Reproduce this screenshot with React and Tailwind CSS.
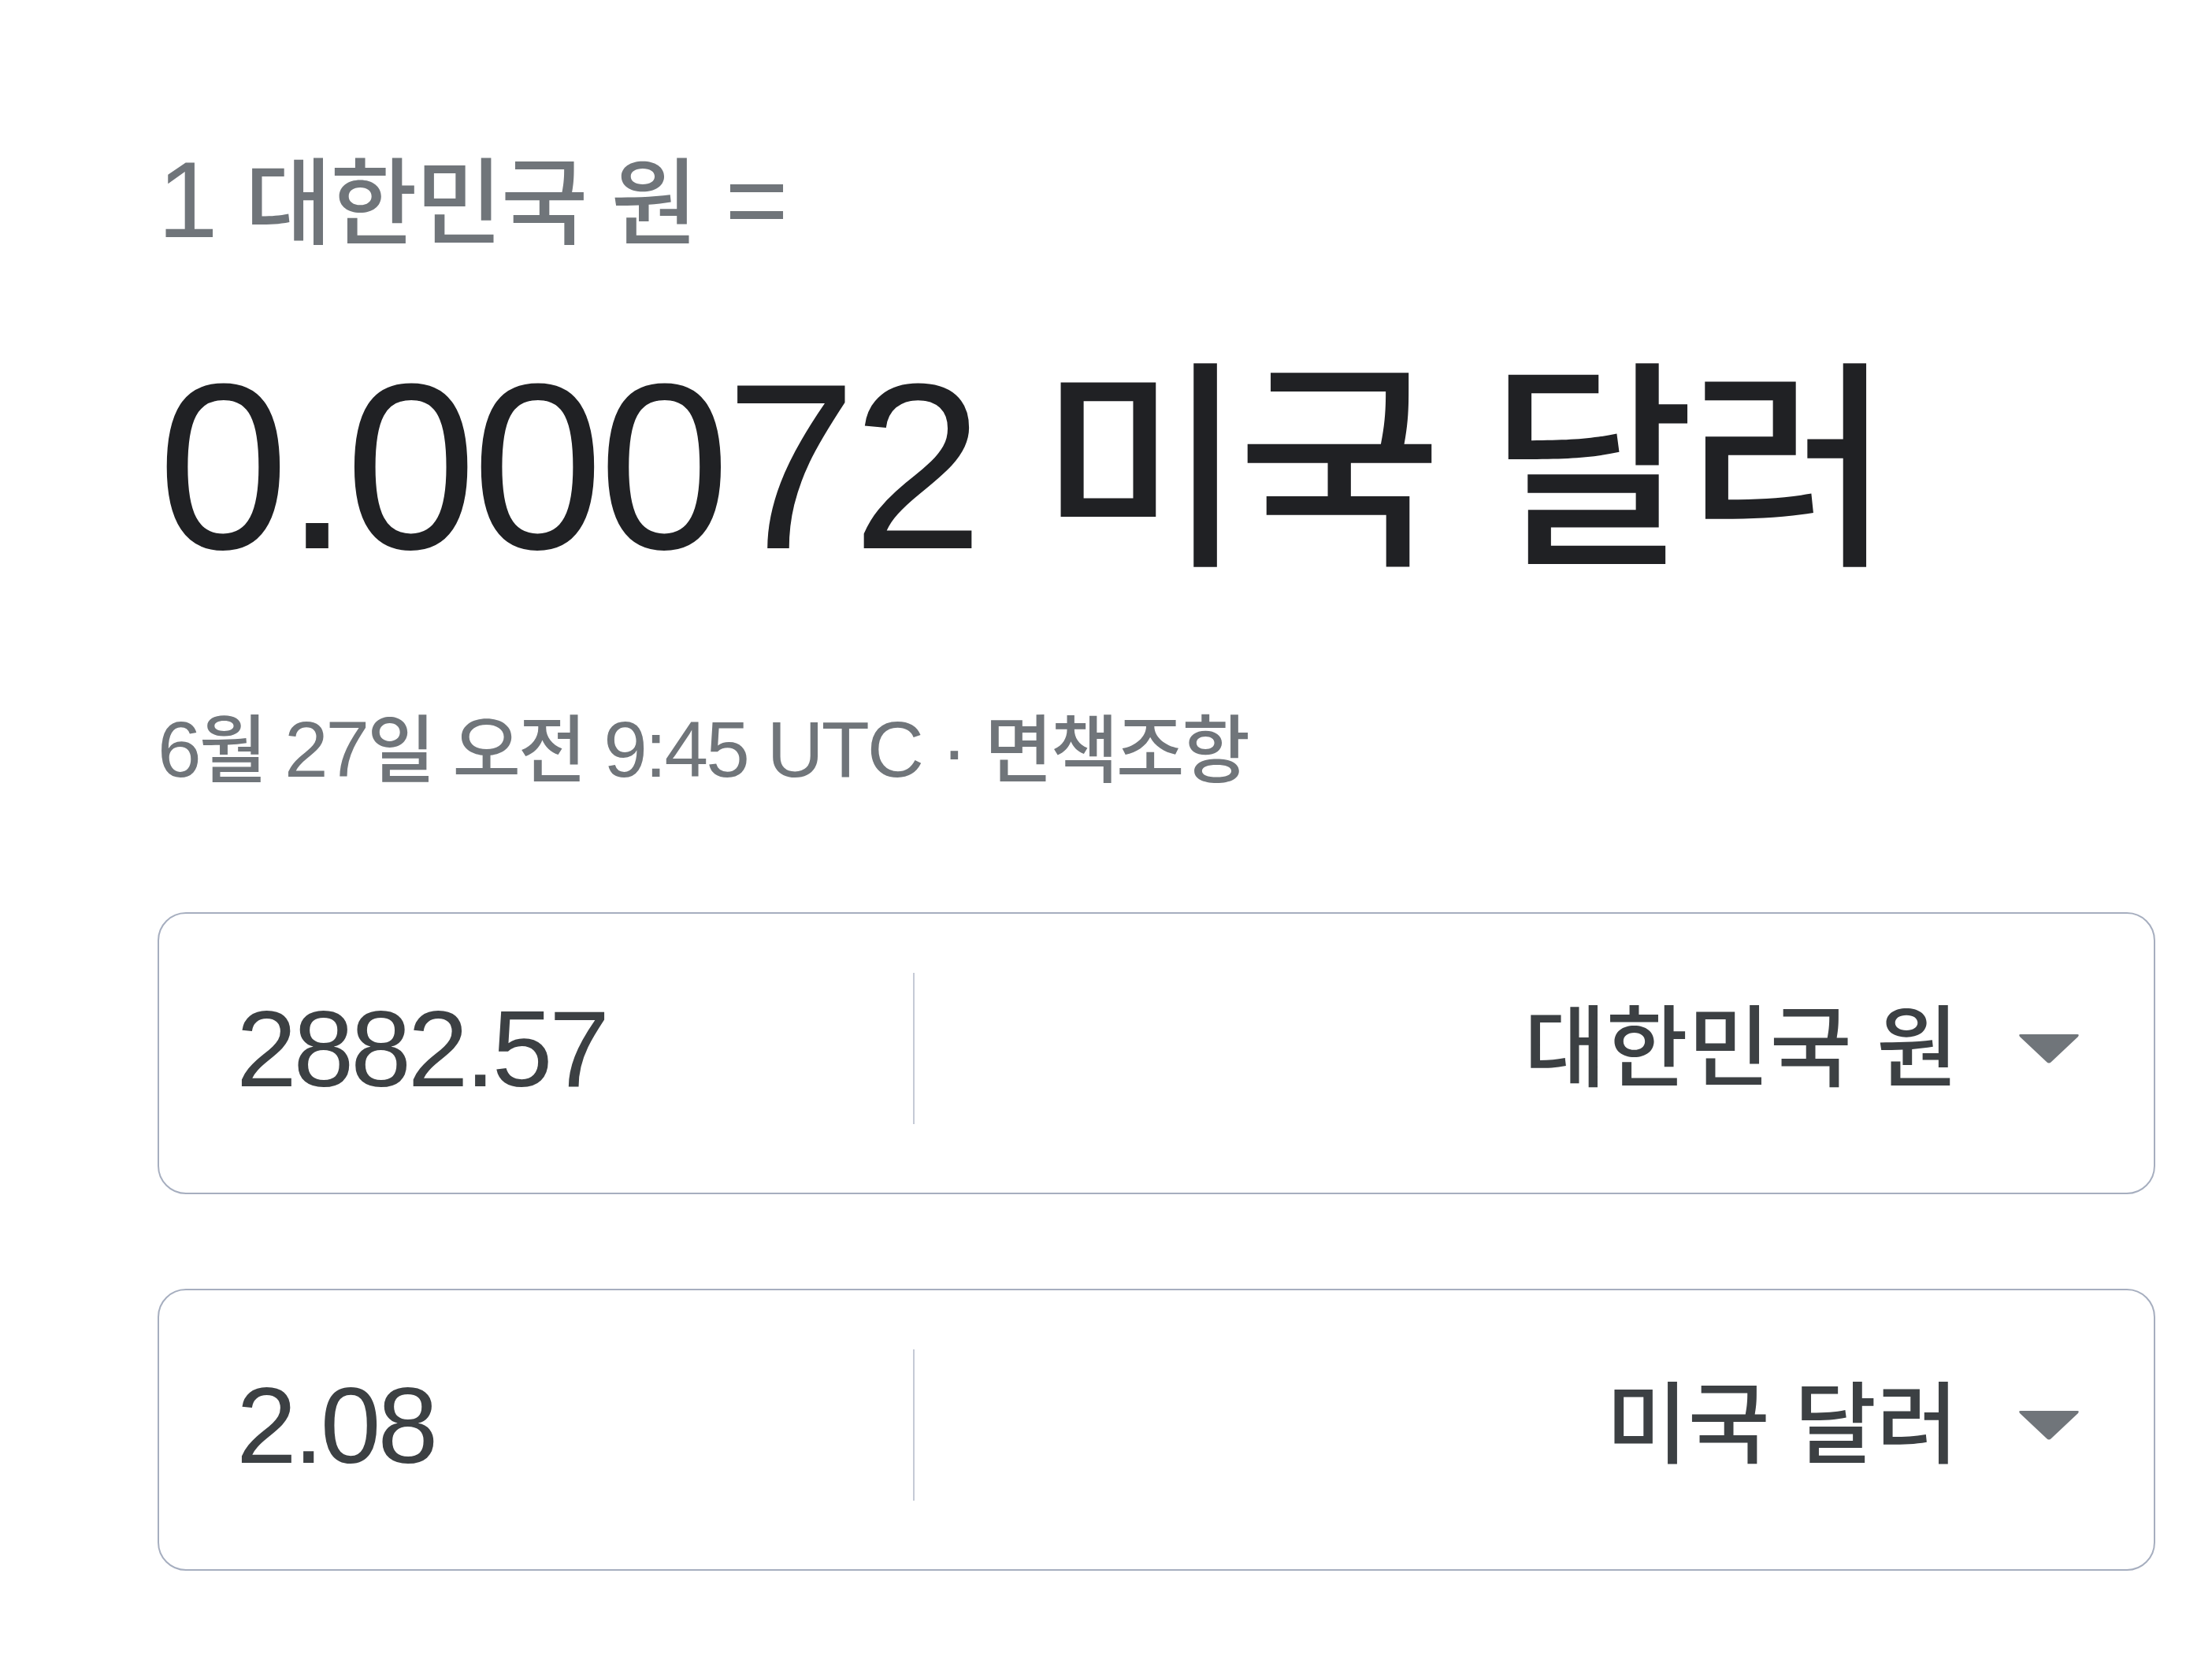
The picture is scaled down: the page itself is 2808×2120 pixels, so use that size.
import React, { useState } from "react";

const font = { fontFamily: '"Liberation Sans", "Noto Sans CJK KR", sans-serif' };

function CurrencyRow({ amount, currency }) {
  return (
    <div className="flex items-center h-[358px] w-[2536px] pb-[12px] rounded-[36px] border-2 border-[#a6aebf] bg-white">
      <div className="w-[957px] pl-[98px] text-[138px] leading-none tracking-[-0.03em] text-[#3c4043]">
        {amount}
      </div>
      <div className="w-[2px] h-[192px] bg-[#c5cad6]" />
      <div className="flex flex-1 items-center justify-end gap-[76px] pr-[94px]">
        <span className="text-[113px] leading-none font-medium text-[#3c4043]">{currency}</span>
        <svg width="78" height="38" viewBox="0 0 78 38" className="shrink-0">
          <path d="M3 1 L75 1 Q78 1 76 4 L42 36 Q39 39 36 36 L2 4 Q0 1 3 1 Z" fill="#70757a" />
        </svg>
      </div>
    </div>
  );
}

export default function App() {
  const [rows] = useState([
    { amount: "2882.57", currency: "대한민국 원" },
    { amount: "2.08", currency: "미국 달러" },
  ]);

  const ko = "text-[94px]";

  return (
    <div className="min-h-screen w-full bg-white pl-[200px] pt-[184px]" style={font}>
      <div className="text-[138px] leading-none tracking-[-0.015em] text-[#70757a]">
        1 <span className="text-[120px] font-medium">대한민국 원</span> =
      </div>
      <div className="mt-[120px] text-[300px] leading-none text-[#202124]">
        <span className="tracking-[-0.02em]">0.00072 </span>
        <span className="text-[282px] font-medium tracking-[-0.03em]">미국 달러</span>
      </div>
      <div className="mt-[159px] text-[100px] leading-none tracking-[-0.03em] font-medium text-[#70757a]">
        6<span className={ko}>월</span> 27<span className={ko}>일</span> <span className={ko}>오전</span> 9:45 UTC ·{" "}
        <span className={ko}>면책조항</span>
      </div>
      <div className="mt-[157px] flex flex-col gap-[120px]">
        {rows.map((r) => (
          <CurrencyRow key={r.currency} amount={r.amount} currency={r.currency} />
        ))}
      </div>
    </div>
  );
}
